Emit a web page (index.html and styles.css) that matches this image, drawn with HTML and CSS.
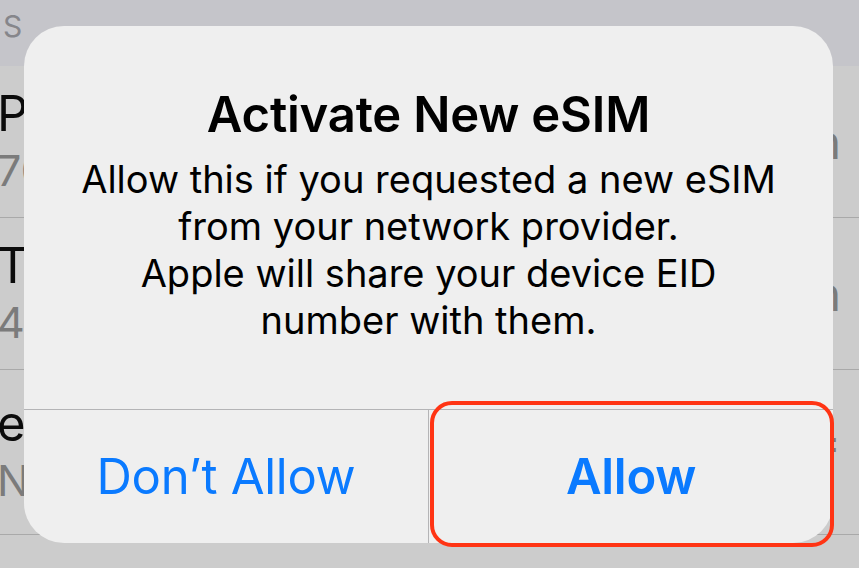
FILE: index.html
```html
<!DOCTYPE html>
<html lang="en">
<head>
  <meta charset="UTF-8" />
  <meta name="viewport" content="width=device-width, initial-scale=1.0">
  <title>Activate New eSIM</title>
  <link rel="stylesheet" href="styles.css">
</head>
<body>

  <div class="settings">
    <div class="section-head">S</div>
    <div class="row">
      <div class="row-text">
        <div class="row-title">Primary</div>
        <div class="row-sub">70 555 0142</div>
      </div>
      <div class="row-value">On</div>
    </div>
    <div class="row">
      <div class="row-text">
        <div class="row-title">Travel</div>
        <div class="row-sub">4 555 0198</div>
      </div>
      <div class="row-value">On</div>
    </div>
    <div class="row row-tall">
      <div class="row-text">
        <div class="row-title">eSIM</div>
        <div class="row-sub">No SIM</div>
      </div>
      <div class="row-value row-value-up">=</div>
    </div>
    <div class="row row-last"></div>
  </div>

  <div class="alert">
    <div class="alert-body">
      <h1 class="alert-title">Activate New eSIM</h1>
      <p class="alert-message">Allow this if you requested a new eSIM from your network provider.<br>Apple will share your device EID number with them.</p>
    </div>
    <div class="alert-actions">
      <div class="alert-btn">Don’t Allow</div>
      <div class="alert-btn alert-btn-main">Allow</div>
    </div>
  </div>

  <div class="highlight"></div>

</body>
</html>
```

FILE: styles.css
```css
body {
  font-family: 'Inter', 'Noto Sans', sans-serif;
  margin: 0;
  padding: 0;
  width: 859px;
  height: 568px;
  overflow: hidden;
  position: relative;
  background-color: #cbcbcb;
}

/* dimmed settings list behind the alert */
.settings {
  width: 100%;
}

.section-head {
  height: 66px;
  background-color: #c5c5ca;
  color: #86868b;
  font-size: 30px;
  line-height: 52px;
  padding-left: 3px;
}

.row {
  height: 151px;
  border-bottom: 1px solid #a9a9a9;
  display: flex;
  justify-content: space-between;
  align-items: center;
  background-color: #cccccc;
}

.row-tall {
  height: 164px;
}

.row-last {
  height: 40px;
  border-bottom: none;
}

.row-text {
  margin-left: -3px;
}

.row-title {
  color: #0b0b0b;
  font-size: 49px;
  line-height: 56px;
}

.row-sub {
  color: #7b7b7b;
  font-size: 43px;
  line-height: 56px;
}

.row-value {
  color: #7b7b7b;
  font-size: 48px;
  margin-right: 18px;
}

.row-value-up {
  margin-bottom: 22px;
}

/* alert */
.alert {
  position: absolute;
  left: 24px;
  top: 26px;
  width: 809px;
  height: 517px;
  background-color: #efefef;
  border-radius: 40px;
  display: flex;
  flex-direction: column;
  overflow: hidden;
}

.alert-body {
  padding: 59px 50px 0;
  height: 324px;
  text-align: center;
  color: #000;
}

.alert-title {
  margin: 0;
  font-size: 49px;
  font-weight: 600;
  line-height: 60px;
  letter-spacing: -0.2px;
}

.alert-message {
  margin: 11px 0 0;
  font-size: 38px;
  line-height: 47px;
}

.alert-actions {
  flex: 1;
  display: flex;
  border-top: 1px solid #b4b4b6;
}

.alert-btn {
  flex: 1;
  display: flex;
  align-items: center;
  justify-content: center;
  color: #0a7aff;
  font-size: 49px;
  line-height: 60px;
  letter-spacing: -0.3px;
}

.alert-btn + .alert-btn {
  border-left: 1px solid #b4b4b6;
}

.alert-btn-main {
  font-weight: 600;
}

/* red annotation box around the Allow button */
.highlight {
  position: absolute;
  left: 430px;
  top: 401px;
  width: 396px;
  height: 138px;
  border: 4.5px solid #ff3414;
  border-radius: 22px;
}
```
